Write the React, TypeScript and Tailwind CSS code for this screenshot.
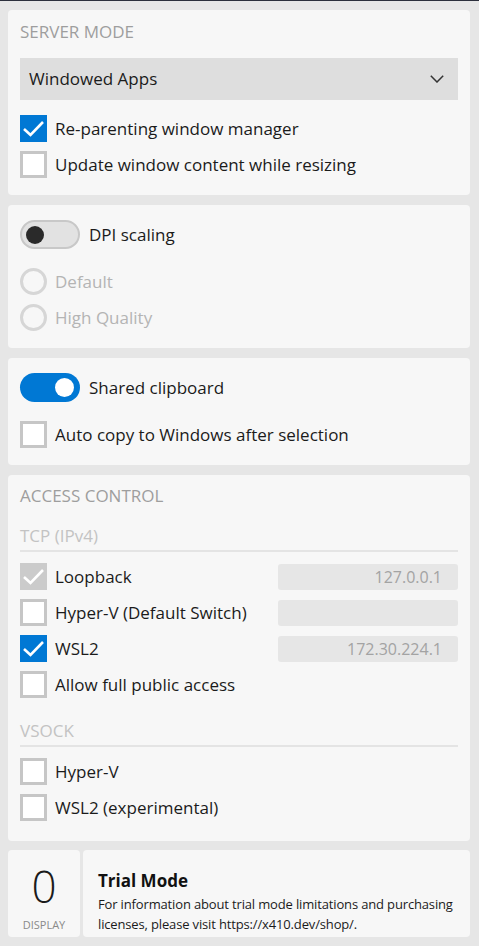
import React from "react";

const font = { fontFamily: '"Open Sans", "Noto Sans", sans-serif' };

function Check({ disabled = false }: { disabled?: boolean }) {
  return (
    <div
      className={`w-[27px] h-[27px] shrink-0 flex items-center justify-center ${
        disabled ? "bg-[#cbcbcb]" : "bg-[#0078d4]"
      }`}
    >
      <svg width="27" height="27" viewBox="0 0 27 27">
        <path d="M4 14 L10.5 20 L23 7" fill="none" stroke="white" strokeWidth="2.6" strokeLinejoin="miter" />
      </svg>
    </div>
  );
}

function Box() {
  return <div className="w-[27px] h-[27px] shrink-0 border-[3px] border-[#c6c6c6] bg-white" />;
}

function CheckRow({ checked, label, disabled }: { checked?: boolean; label: string; disabled?: boolean }) {
  return (
    <div className="flex items-center h-[27px] gap-[8px]">
      {checked ? <Check disabled={disabled} /> : <Box />}
      <span className="text-[17px] text-[#1b1b1b] leading-none">{label}</span>
    </div>
  );
}

function Radio({ label }: { label: string }) {
  return (
    <div className="flex items-center h-[27px] gap-[8px]">
      <div className="w-[27px] h-[27px] rounded-full border-[3px] border-[#d6d6d6]" />
      <span className="text-[17px] text-[#b4b4b4] leading-none">{label}</span>
    </div>
  );
}

function Toggle({ on, label }: { on: boolean; label: string }) {
  return (
    <div className="flex items-center h-[29px] gap-[9px]">
      {on ? (
        <div className="w-[60px] h-[29px] rounded-full bg-[#0078d4] flex items-center justify-end pr-[6px]">
          <div className="w-[19px] h-[19px] rounded-full bg-white" />
        </div>
      ) : (
        <div className="w-[60px] h-[29px] rounded-full bg-[#e2e2e2] border-2 border-[#c8c8c8] flex items-center pl-[4px]">
          <div className="w-[18px] h-[18px] rounded-full bg-[#2a2a2a]" />
        </div>
      )}
      <span className="text-[17px] text-[#1b1b1b] leading-none">{label}</span>
    </div>
  );
}

function IpRow({ checked, disabled, label, value }: { checked?: boolean; disabled?: boolean; label: string; value: string }) {
  return (
    <div className="flex items-center justify-between h-[27px]">
      <CheckRow checked={checked} disabled={disabled} label={label} />
      <div className="w-[180px] h-[26px] bg-[#e6e6e6] rounded-[3px] flex items-center justify-end pr-[16px] text-[16px] text-[#a3a3a3]">
        {value}
      </div>
    </div>
  );
}

export default function App() {
  return (
    <div style={font} className="w-[479px] h-[946px] bg-[#e6e6e6] border-t border-[#2c2f3c] pl-[8px] pt-[9px] flex flex-col">
      {/* Server mode */}
      <div className="w-[462px] h-[185px] bg-[#f7f7f7] rounded-[4px] px-[12px] pt-[9px] flex flex-col">
        <div className="h-[26px] flex items-center text-[17px] text-[#9e9e9e]">SERVER MODE</div>
        <div className="mt-[13px] h-[42px] bg-[#dedede] flex items-center justify-between pl-[9px] pr-[14px]">
          <span className="text-[17px] text-[#1b1b1b]">Windowed Apps</span>
          <svg width="14" height="8" viewBox="0 0 14 8">
            <path d="M0.8 0.8 L7 7 L13.2 0.8" fill="none" stroke="#333" strokeWidth="1.5" />
          </svg>
        </div>
        <div className="mt-[15px] flex flex-col gap-[9px]">
          <CheckRow checked label="Re-parenting window manager" />
          <CheckRow label="Update window content while resizing" />
        </div>
      </div>

      {/* DPI */}
      <div className="mt-[10px] w-[462px] h-[143px] bg-[#f7f7f7] rounded-[4px] px-[12px] pt-[15px] flex flex-col">
        <Toggle on={false} label="DPI scaling" />
        <div className="mt-[19px] flex flex-col gap-[9px]">
          <Radio label="Default" />
          <Radio label="High Quality" />
        </div>
      </div>

      {/* Clipboard */}
      <div className="mt-[10px] w-[462px] h-[107px] bg-[#f7f7f7] rounded-[4px] px-[12px] pt-[15px] flex flex-col">
        <Toggle on label="Shared clipboard" />
        <div className="mt-[19px]">
          <CheckRow label="Auto copy to Windows after selection" />
        </div>
      </div>

      {/* Access control */}
      <div className="mt-[10px] w-[462px] h-[366px] bg-[#f7f7f7] rounded-[4px] px-[12px] pt-[8px] flex flex-col">
        <div className="h-[26px] flex items-center text-[17px] text-[#9e9e9e]">ACCESS CONTROL</div>
        <div className="mt-[14px] h-[26px] flex items-center text-[17px] text-[#c3c3c3]">TCP (IPv4)</div>
        <div className="mt-[1px] h-[2px] bg-[#e4e4e4]" />
        <div className="mt-[11px] flex flex-col gap-[9px]">
          <IpRow checked disabled label="Loopback" value="127.0.0.1" />
          <IpRow label="Hyper-V (Default Switch)" value="" />
          <IpRow checked label="WSL2" value="172.30.224.1" />
          <CheckRow label="Allow full public access" />
        </div>
        <div className="mt-[20px] h-[26px] flex items-center text-[17px] text-[#c3c3c3]">VSOCK</div>
        <div className="mt-[1px] h-[2px] bg-[#e4e4e4]" />
        <div className="mt-[11px] flex flex-col gap-[9px]">
          <CheckRow label="Hyper-V" />
          <CheckRow label="WSL2 (experimental)" />
        </div>
      </div>

      {/* Bottom */}
      <div className="mt-[9px] w-[462px] h-[87px] flex gap-[3px]">
        <div className="w-[72px] h-full bg-[#f7f7f7] rounded-[4px] flex flex-col items-center pt-[14px]">
          <div className="text-[44px] font-light leading-[44px] text-[#1b1b1b]">0</div>
          <div className="mt-[11px] text-[11px] text-[#8a8a8a] leading-none">DISPLAY</div>
        </div>
        <div className="flex-1 h-full bg-[#f7f7f7] rounded-[4px] pl-[15px] pr-[2px] pt-[20px]">
          <div className="text-[17px] font-bold text-[#111] leading-[22px]">Trial Mode</div>
          <div className="mt-[2px] text-[13px] text-[#1b1b1b] leading-[20px] whitespace-nowrap tracking-[-0.15px]">
            For information about trial mode limitations and purchasing
            <br />
            licenses, please visit https://x410.dev/shop/.
          </div>
        </div>
      </div>
    </div>
  );
}
